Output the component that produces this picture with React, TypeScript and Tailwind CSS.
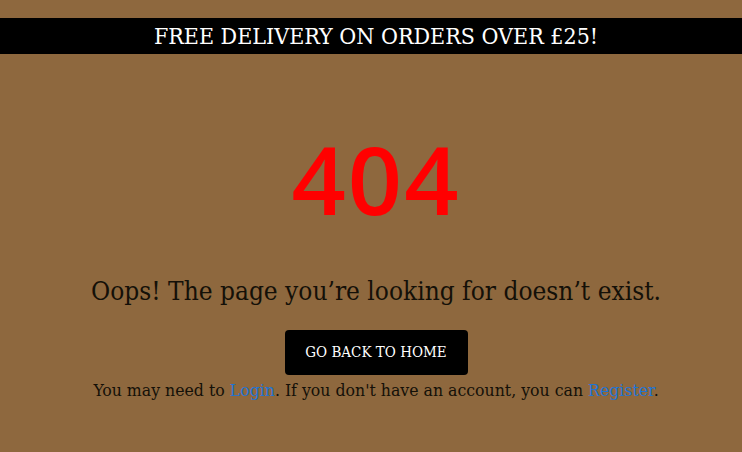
export default function App() {
  const slab = { fontFamily: '"DejaVu Serif", serif', fontStretch: "condensed" as const };
  return (
    <div className="min-h-[452px] w-full bg-[#8e683e] pt-[18px]" style={slab}>
      <div className="flex h-[36px] items-center justify-center bg-black pl-[10px] text-[23px] text-white">
        FREE DELIVERY ON ORDERS OVER £25!
      </div>
      <div className="flex flex-col items-center pl-[10px]">
        <div
          className="mt-[64px] text-[95px] font-semibold leading-[120px] tracking-[2px] text-[#ff0000]"
          style={{ fontFamily: '"Open Sans", sans-serif', fontStretch: "normal" }}
        >
          404
        </div>
        <p className="mt-[38px] text-[26px] leading-[30px] text-[#141008]">
          Oops! The page you’re looking for doesn’t exist.
        </p>
        <a className="mt-[24px] flex h-[45px] w-[183px] items-center justify-center rounded-[4px] bg-black text-[15px] text-white">
          GO BACK TO HOME
        </a>
        <p className="mt-[2px] text-[17.5px] text-[#141008]">
          You may need to <span className="text-[#1f74d4]">Login</span>. If you don't have an account, you can{" "}
          <span className="text-[#1f74d4]">Register</span>.
        </p>
      </div>
    </div>
  );
}
